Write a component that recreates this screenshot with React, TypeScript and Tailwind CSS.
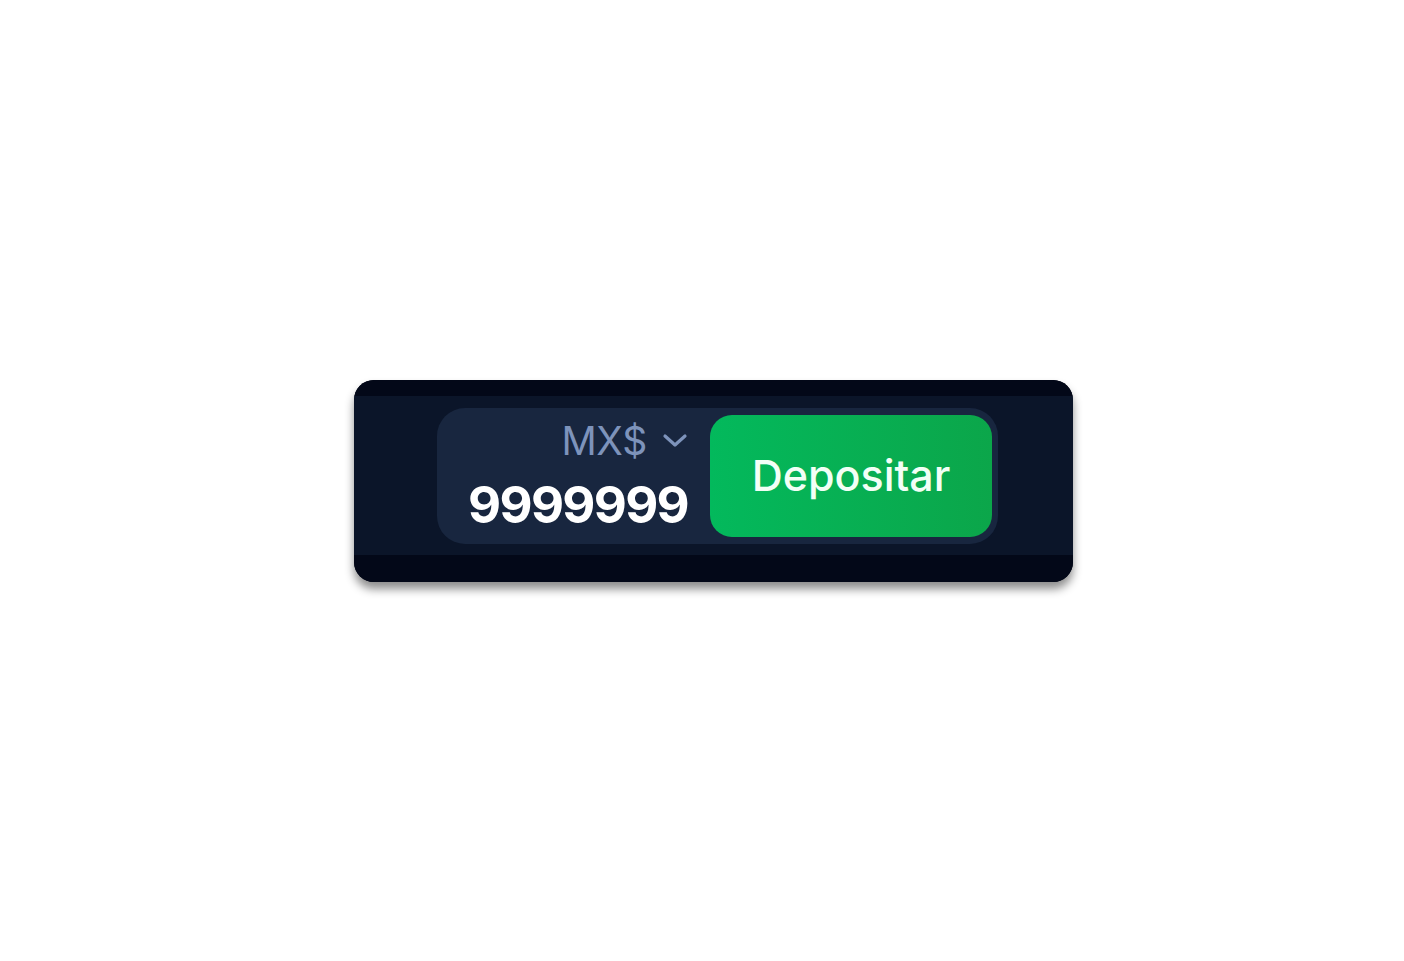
import React from "react";

export default function App() {
  return (
    <div className="w-full h-[961px] bg-white flex items-center justify-center pl-[23px] pt-[1px]" style={{ fontFamily: "Inter, 'Noto Sans', sans-serif" }}>
      <div className="w-[719px] h-[202px] rounded-[20px] overflow-hidden flex flex-col bg-[#030818] shadow-[0_7px_10px_rgba(0,0,0,0.45)]">
        <div className="h-[16px] bg-[#030818]" />
        <div className="h-[159px] bg-[#0b1529] flex items-center pl-[83px]">
          <div className="w-[561px] h-[136px] rounded-[28px] bg-[#18263f] flex items-center pr-[6px]">
            <div className="flex-1 flex flex-col items-end pr-[22px] pt-[2px]">
              <div className="flex items-center gap-[15px] h-[44px] -mt-[5px]">
                <span className="text-[39px] leading-none text-[#7d93bb] tracking-[-0.3px]">MX$</span>
                <svg width="26" height="16" viewBox="0 0 26 16" className="mt-[2px]">
                  <path d="M3 3 L13 12 L23 3" fill="none" stroke="#7d93bb" strokeWidth="3.2" strokeLinecap="round" strokeLinejoin="round" />
                </svg>
              </div>
              <span className="text-[51px] leading-none font-bold text-white mt-[17px] tracking-[-1.7px]">9999999</span>
            </div>
            <div className="w-[282px] h-[122px] rounded-[22px] bg-gradient-to-r from-[#03b95c] to-[#0ba64a] flex items-center justify-center">
              <span className="text-[43px] leading-none font-medium text-[#f2fff6] tracking-[0px]">Depositar</span>
            </div>
          </div>
        </div>
        <div className="h-[27px] bg-[#030818]" />
      </div>
    </div>
  );
}
